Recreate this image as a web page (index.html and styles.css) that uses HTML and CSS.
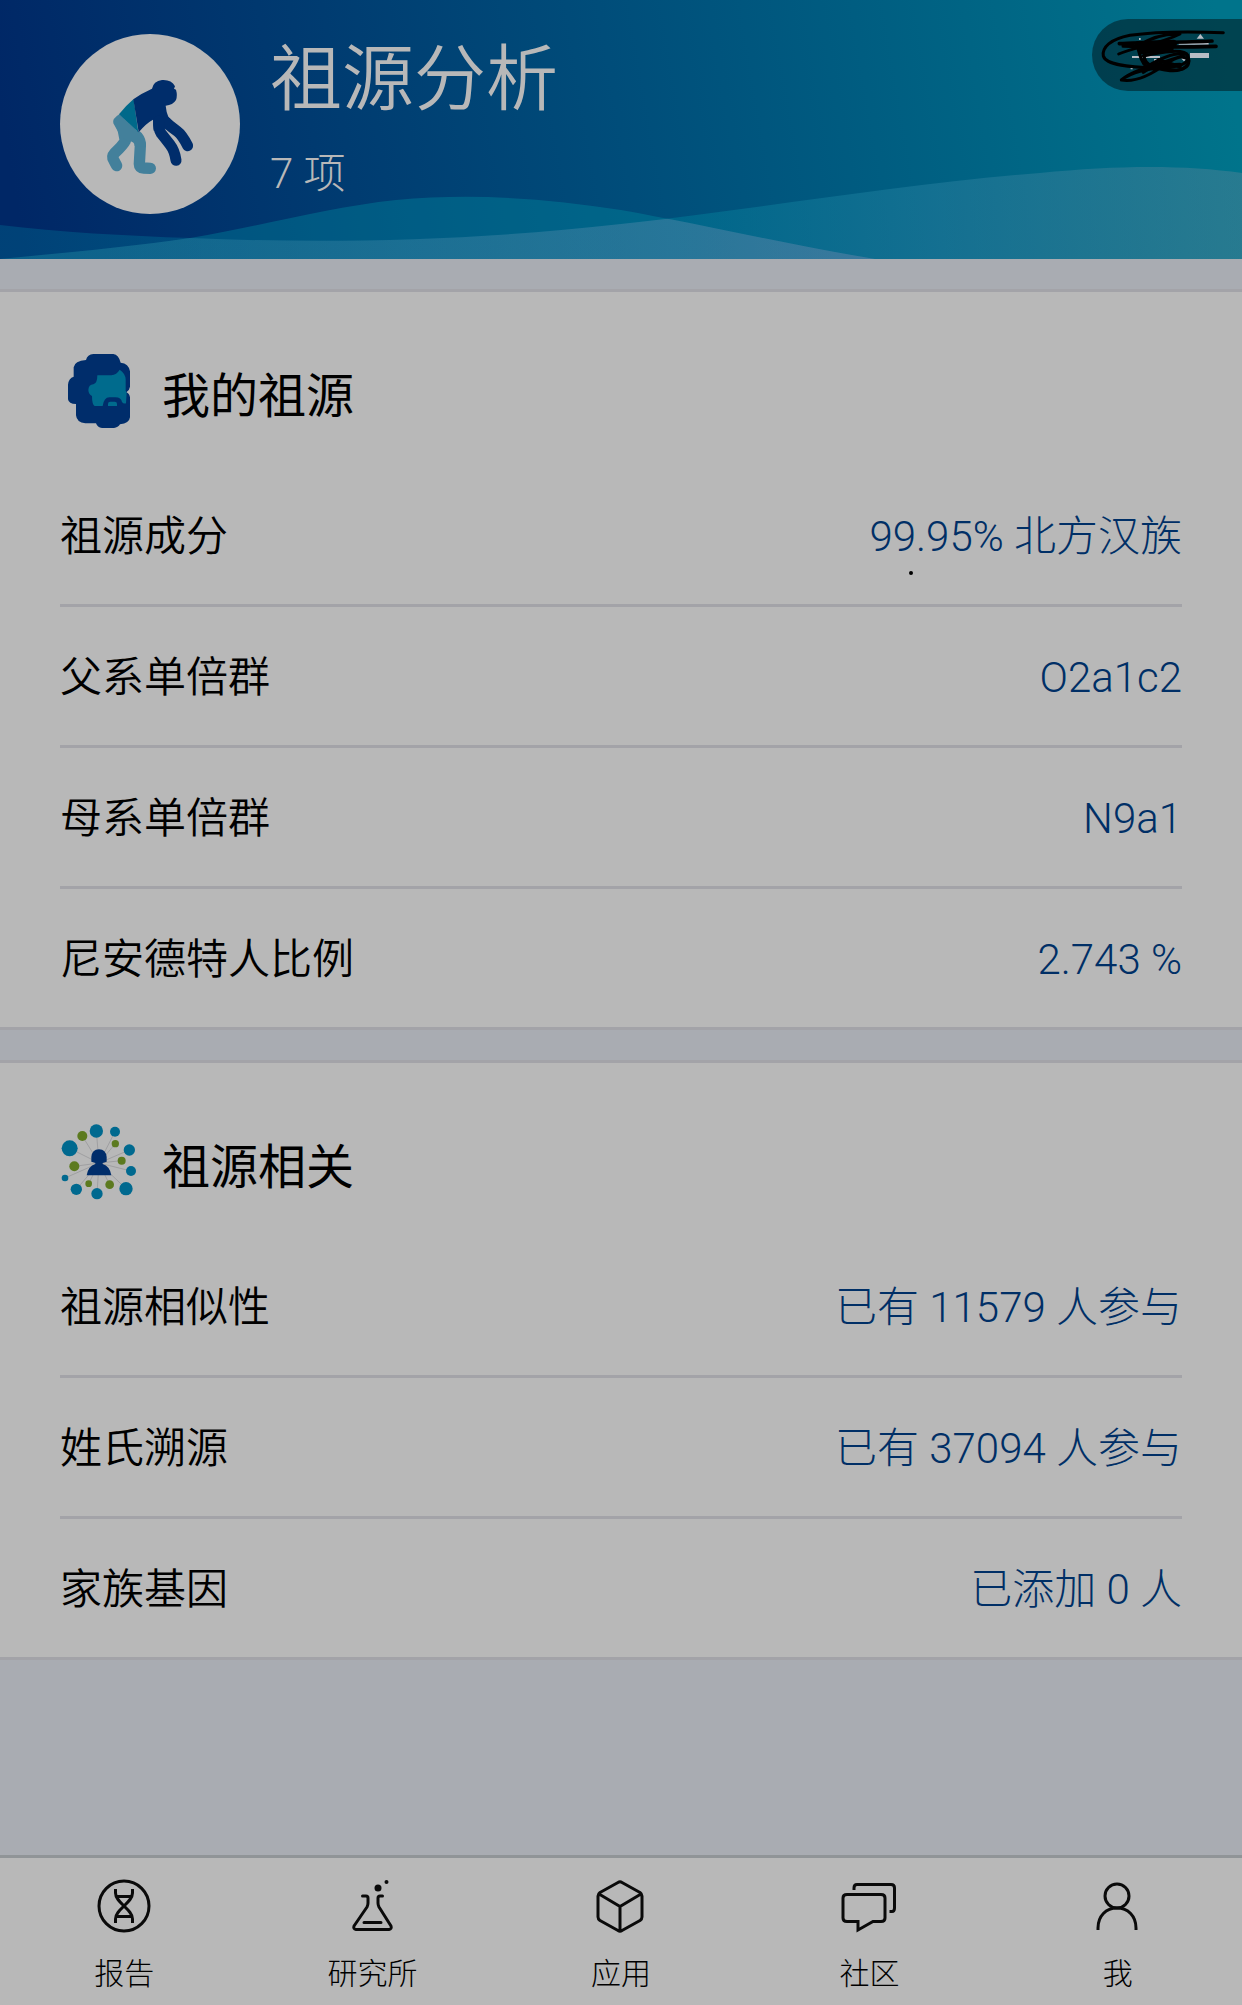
FILE: index.html
```html
<!DOCTYPE html>
<html lang="zh-CN">
<head>
    <meta charset="utf-8">
    <meta name="viewport" content="width=device-width, initial-scale=1">
    <title>祖源分析</title>
    <link rel="stylesheet" href="styles.css">
</head>
<body>
    <header class="header">
        <svg class="waves" viewBox="0 0 1242 259" preserveAspectRatio="none" aria-hidden="true">
            <defs>
                <linearGradient id="wave-back" x1="0" y1="0" x2="1" y2="0">
                    <stop offset="0" stop-color="#0080a0" stop-opacity="0.3"/>
                    <stop offset="0.55" stop-color="#0088a0" stop-opacity="0.4"/>
                    <stop offset="0.75" stop-color="#3088a8" stop-opacity="0.4"/>
                    <stop offset="1" stop-color="#70889a" stop-opacity="0.35"/>
                </linearGradient>
                <linearGradient id="wave-cross" x1="0" y1="0" x2="1" y2="0">
                    <stop offset="0" stop-color="#7080a0" stop-opacity="0.1"/>
                    <stop offset="1" stop-color="#8878a8" stop-opacity="0.36"/>
                </linearGradient>
                <clipPath id="wave-clip">
                    <path d="M0 259C70 252 130 247 190 238C270 224 330 207 396 200C470 193 545 198 621 210C700 224 790 245 875 259Z"/>
                </clipPath>
            </defs>
            <path fill="#0096a5" fill-opacity="0.35" d="M0 259C70 252 130 247 190 238C270 224 330 207 396 200C470 193 545 198 621 210C700 224 790 245 875 259Z"/>
            <path fill="url(#wave-back)" d="M0 225C60 232 125 236 190 238C330 244 470 241 621 224C760 209 900 184 1040 173C1120 165 1185 165 1242 173V259H0Z"/>
            <path fill="url(#wave-cross)" clip-path="url(#wave-clip)" d="M0 225C60 232 125 236 190 238C330 244 470 241 621 224C700 215 760 209 875 194V259H0Z"/>
        </svg>
        <div class="avatar">
            <svg viewBox="60 42 540 540" aria-hidden="true">
                <g fill="none" stroke="#43809b" stroke-width="34" stroke-linecap="round" stroke-linejoin="round">
                    <path d="M248 320L256 362Q250 374 224 399Q214 410 222 422L230 437"/>
                    <path d="M292 350Q302 362 301 378L298 432Q298 444 310 444L331 445"/>
                </g>
                <path fill="#43809b" d="M238 283L306 347Q318 360 317 380L284 378Q284 364 266 364L242 350Q230 328 220 310Q216 296 238 283Z"/>
                <path fill="#00698a" d="M281 237L295 337L237 283Q256 258 281 237Z"/>
                <path fill="#002d6b" d="M280 238Q304 220 336 206Q340 184 366 180Q394 178 405 199L402 206L408 209Q413 226 408 240Q399 255 377 257L380 276Q384 292 392 302L372 328L341 332L339 299Q318 310 296 337Z"/>
                <g fill="none" stroke="#002d6b" stroke-width="33" stroke-linecap="round" stroke-linejoin="round">
                    <path d="M376 304Q382 312 412 334Q426 344 443 377"/>
                    <path d="M356 304Q354 326 364 341Q376 356 390 374Q404 392 408 421"/>
                </g>
            </svg>
        </div>
        <div class="header-text">
            <h1>祖源分析</h1>
            <p>7 项</p>
        </div>
        <button class="pill" type="button" aria-label="更多">
            <svg viewBox="36 27 450 216" aria-hidden="true">
                <g fill="#b8bcc4">
                    <path d="M296 96H386V104H296ZM330 129H387V144H330ZM350 86L361 72L372 86ZM156 138H240V144H156ZM304 146L312 138L320 146L312 154Z"/>
                    <path d="M177 84H182V90H177ZM213 84H218V90H213ZM235 121H242V127H235ZM152 172H158V178H152ZM195 173H201V179H195ZM222 147H230V152H222Z"/>
                </g>
                <g fill="none" stroke="#000" stroke-width="9" stroke-linecap="round" stroke-linejoin="round">
                    <path d="M430 68C330 64 230 64 150 76C90 88 66 112 70 138C78 166 150 172 230 174C300 174 330 160 324 136C314 116 250 124 190 138"/>
                    <path d="M116 132C160 112 240 102 300 72C250 70 210 84 172 108C180 140 186 160 200 170C250 140 290 124 320 134C340 160 310 186 270 182C220 178 180 160 196 120"/>
                    <path d="M124 210C160 180 220 168 310 136M124 210C170 218 220 190 260 160C290 140 310 134 326 150C330 176 300 186 260 176C210 170 150 190 124 210"/>
                </g>
                <g fill="none" stroke="#000" stroke-width="11" stroke-linecap="round">
                    <path d="M118 101C200 96 300 98 396 93M130 108C220 112 310 112 408 109"/>
                    <path stroke-width="22" d="M176 104L280 100M186 122L270 116"/>
                    <path d="M200 168L300 164M236 150L300 170M190 186L230 160"/>
                </g>
            </svg>
        </button>
    </header>

    <main>
        <section class="card">
            <div class="card-title">
                <svg viewBox="60 66 234 234" aria-hidden="true">
                    <path fill="#002d6b" d="M160 72H220Q236 74 242 98Q266 100 270 124V170Q268 182 259 187Q268 190 270 202V262Q268 280 240 283Q234 293 222 294H186Q172 292 168 280H136Q110 278 108 256V222Q86 222 84 208V164Q86 144 101 140V112Q104 92 138 90Q142 74 160 72Z"/>
                    <path fill="#006b8d" d="M239 119Q256 130 257 148V182L260 188L258 220Q250 222 246 216Q244 202 226 202H208Q192 202 188 228H164Q156 224 156 198Q146 194 145 180Q146 164 160 163Q172 160 172 136H214Q230 134 239 119Z"/>
                    <path fill="#006b8d" d="M204 228V222Q204 215 211 215H224Q231 215 231 222V228Z"/>
                </svg>
                <h2>我的祖源</h2>
            </div>
            <ul class="list">
                <li><a href="#"><span>祖源成分</span><span class="value dotted">99.95% 北方汉族</span></a></li>
                <li><a href="#"><span>父系单倍群</span><span class="value">O2a1c2</span></a></li>
                <li><a href="#"><span>母系单倍群</span><span class="value">N9a1</span></a></li>
                <li><a href="#"><span>尼安德特人比例</span><span class="value">2.743 %</span></a></li>
            </ul>
        </section>

        <section class="card">
            <div class="card-title">
                <svg viewBox="60 68 234 234" aria-hidden="true">
                    <path fill="none" stroke="#929296" stroke-width="2" d="M177 188L169 92M177 188L225 94M177 188L127 107M177 188L89 144M177 188L226 130M177 188L268 149M177 188L245 181M177 188L103 198M177 188L75 233M177 188L273 212M177 188L109 267M177 188L146 250M177 188L171 280M177 188L209 253M177 188L258 265"/>
                    <g fill="#00698f">
                        <circle cx="169" cy="92" r="20"/>
                        <circle cx="225" cy="94" r="15"/>
                        <circle cx="89" cy="144" r="24"/>
                        <circle cx="268" cy="149" r="17"/>
                        <circle cx="273" cy="212" r="15"/>
                        <circle cx="258" cy="265" r="20"/>
                        <circle cx="171" cy="280" r="17"/>
                        <circle cx="109" cy="267" r="17"/>
                        <circle cx="75" cy="233" r="10"/>
                    </g>
                    <g fill="#5c7a1f">
                        <circle cx="127" cy="107" r="15"/>
                        <circle cx="226" cy="130" r="11"/>
                        <circle cx="245" cy="181" r="12"/>
                        <circle cx="103" cy="198" r="15"/>
                        <circle cx="146" cy="250" r="10"/>
                        <circle cx="209" cy="253" r="13"/>
                    </g>
                    <path fill="#002d6b" d="M154 184V170Q156 148 177 147Q198 148 200 170V184L188 188V191Q210 198 214 225H140Q144 198 166 191V188Z"/>
                </svg>
                <h2>祖源相关</h2>
            </div>
            <ul class="list">
                <li><a href="#"><span>祖源相似性</span><span class="value">已有 11579 人参与</span></a></li>
                <li><a href="#"><span>姓氏溯源</span><span class="value">已有 37094 人参与</span></a></li>
                <li><a href="#"><span>家族基因</span><span class="value">已添加 0 人</span></a></li>
            </ul>
        </section>
    </main>

    <nav class="tabbar">
        <a href="#">
            <svg viewBox="0 0 60 60" aria-hidden="true">
                <circle cx="30" cy="30" r="25"/>
                <path d="M21.500 13V17C21.500 27 38.500 33 38.500 43V47M38.500 13V17C38.500 27 21.500 33 21.500 43V47M23 20.500H37M23 40.500H37"/>
            </svg>
            <span>报告</span>
        </a>
        <a href="#">
            <svg viewBox="0 0 60 60" aria-hidden="true">
                <path stroke-linecap="round" stroke-linejoin="round" d="M19.500 20H23Q25 20 25 22V27Q25 29 24 31L11 50Q10 53 13 53.500H46Q49 53 48 50L36 31Q35 29 35 27V22Q35 20 37 20H39.500M21 46.500H38"/>
                <circle class="solid" cx="35" cy="12" r="3.500"/>
                <circle class="solid" cx="43.500" cy="6" r="2"/>
            </svg>
            <span>研究所</span>
        </a>
        <a href="#">
            <svg viewBox="0 0 60 60" aria-hidden="true">
                <path stroke-linejoin="round" d="M27 6.500Q29 5 31 6.500L49 16.500Q51 18 51 20V41Q51 43 49 44.500L31 54.500Q29 56 27 54.500L9 44.500Q7 43 7 41V20Q7 18 9 16.500ZM8 18L29 30.500L50 18M29 30.500V55"/>
            </svg>
            <span>应用</span>
        </a>
        <a href="#">
            <svg viewBox="0 0 60 60" aria-hidden="true">
                <path d="M8 18.500H42Q46 18.500 46 22V42Q46 45.500 42 45.500H34L19 54V45.500H8Q4 45.500 4 42V22Q4 18.500 8 18.500ZM15 14V12Q15 8.500 18 8.500H52Q55.500 8.500 55.500 12V32Q55.500 35.500 53 35.500H50.500"/>
            </svg>
            <span>社区</span>
        </a>
        <a href="#">
            <svg viewBox="0 0 60 60" aria-hidden="true">
                <ellipse cx="29" cy="20" rx="12" ry="12"/>
                <path d="M10 54V52C10 40 18 32 29 32S48 40 48 52V54"/>
            </svg>
            <span>我</span>
        </a>
    </nav>
</body>
</html>
```
FILE: styles.css
```css
* {
    box-sizing: border-box;
}

body {
    display: flex;
    flex-direction: column;
    min-height: 100vh;
    margin: 0;
    font-family: Roboto, "Noto Sans CJK SC", sans-serif;
    font-weight: 350;
    color: #000;
    background-color: #a9acb2;
}

h1, h2, p, ul {
    margin: 0;
    padding: 0;
}

a {
    color: inherit;
    text-decoration: none;
}

.header {
    position: relative;
    display: flex;
    align-items: flex-start;
    gap: 30px;
    padding: 34px 0 45px 60px;
    color: #b8b8b8;
    background: linear-gradient(80deg, #002766 2%, #004d7a 50%, #00748b 98%);
}

/* waves are drawn behind the header content */
.waves {
    position: absolute;
    left: 0;
    top: 0;
    width: 100%;
    height: 100%;
}

.avatar {
    position: relative;
    width: 180px;
    height: 180px;
    border-radius: 50%;
    background-color: #b8b8b8;
}

.avatar svg {
    display: block;
}

.header-text {
    position: relative;
    flex: 1;
}

.header-text h1 {
    font-size: 72px;
    font-weight: 350;
    line-height: 92px;
}

.header-text p {
    margin-top: 18px;
    font-size: 42px;
    font-weight: 300;
    line-height: 60px;
}

.pill {
    position: absolute;
    top: 19px;
    right: 0;
    width: 150px;
    height: 72px;
    padding: 0;
    border: none;
    border-radius: 36px 0 0 36px;
    background-color: rgba(0, 0, 0, 0.42);
    cursor: pointer;
}

.pill svg {
    display: block;
}

main {
    flex: 1;
}

.card {
    margin-top: 30px;
    border-top: 3px solid #a3a3a8;
    border-bottom: 3px solid #a3a3a8;
    background-color: #b8b8b8;
}

.card-title {
    display: flex;
    align-items: center;
    gap: 24px;
    padding: 60px 60px 36px;
}

.card-title svg {
    width: 78px;
    height: 78px;
}

.card-title h2 {
    padding-top: 12px;
    font-size: 48px;
    font-weight: 400;
    line-height: 60px;
}

.list {
    margin: 0 60px;
    list-style: none;
}

.list li + li {
    border-top: 3px solid #a3a3a8;
}

.list a {
    display: flex;
    align-items: center;
    justify-content: space-between;
    height: 138px;
    padding-top: 4px;
    font-size: 42px;
    line-height: 60px;
}

.value {
    font-weight: 300;
    color: #002f66;
}

.dotted {
    position: relative;
}

.dotted::after {
    content: "";
    position: absolute;
    left: 40px;
    bottom: -8px;
    width: 4px;
    height: 4px;
    border-radius: 50%;
    background-color: #000;
}

.tabbar {
    display: flex;
    border-top: 3px solid #909497;
    background-color: #b8b8b8;
}

.tabbar a {
    flex: 1;
    display: flex;
    flex-direction: column;
    align-items: center;
    gap: 16px;
    padding: 18px 0 9px;
    font-size: 30px;
    font-weight: 300;
    line-height: 44px;
}

.tabbar svg {
    width: 60px;
    height: 60px;
    fill: none;
    stroke: #0a0a0a;
    stroke-width: 3;
}

.tabbar .solid {
    fill: #0a0a0a;
    stroke: none;
}
```
